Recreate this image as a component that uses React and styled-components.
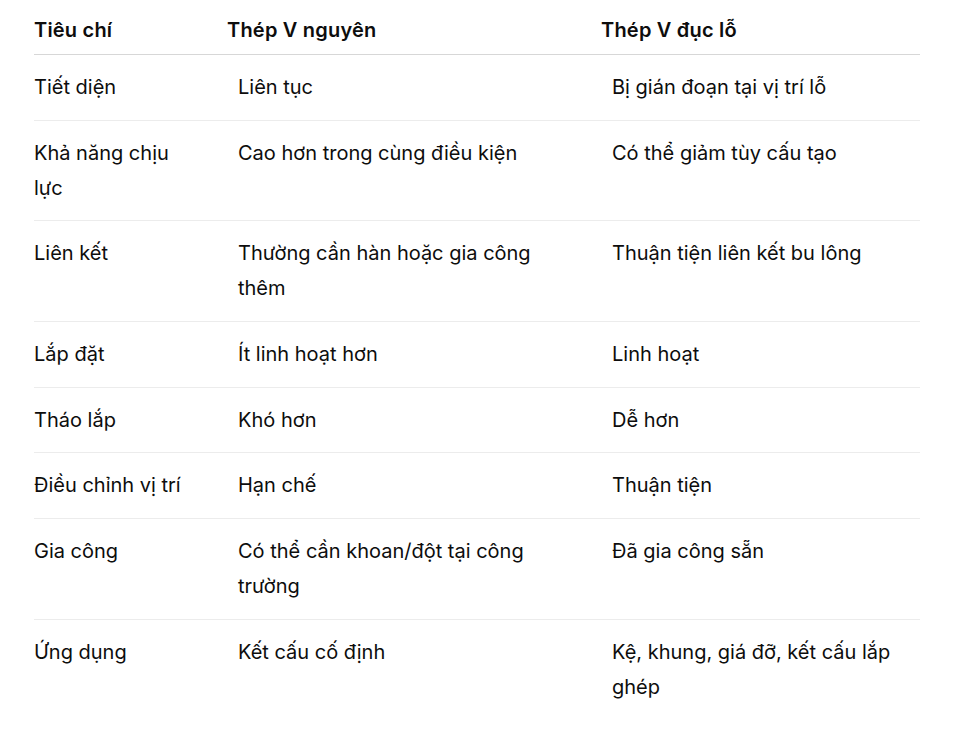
import React from 'react';
import styled, { createGlobalStyle } from 'styled-components';

const GlobalStyle = createGlobalStyle`
  body {
    margin: 0;
    background: #ffffff;
    font-family: Inter, "Noto Sans", "Liberation Sans", sans-serif;
    color: #0d0d0d;
  }
`;

const Page = styled.div`
  padding: 8px 57px 0 34px;
`;

const Table = styled.table`
  width: 886px;
  border-collapse: collapse;
  table-layout: fixed;
  font-size: 20px;
  line-height: 35px;
`;

const HeadCell = styled.th`
  text-align: left;
  font-weight: 600;
  letter-spacing: 0.2px;
  padding: 5px 24px 6px 0;
  border-bottom: 1px solid #d7d7d7;
`;

const Row = styled.tr`
  border-bottom: 1px solid #ececec;
  &:last-child {
    border-bottom: none;
  }
`;

const Cell = styled.td`
  vertical-align: top;
  padding: 15px ${p => (p.$last ? '0' : '30px')} 14.7px ${p => (p.$first ? '0' : '11px')};
`;

const rows = [
  ['Tiết diện', 'Liên tục', 'Bị gián đoạn tại vị trí lỗ'],
  ['Khả năng chịu lực', 'Cao hơn trong cùng điều kiện', 'Có thể giảm tùy cấu tạo'],
  ['Liên kết', 'Thường cần hàn hoặc gia công thêm', 'Thuận tiện liên kết bu lông'],
  ['Lắp đặt', 'Ít linh hoạt hơn', 'Linh hoạt'],
  ['Tháo lắp', 'Khó hơn', 'Dễ hơn'],
  ['Điều chỉnh vị trí', 'Hạn chế', 'Thuận tiện'],
  ['Gia công', 'Có thể cần khoan/đột tại công trường', 'Đã gia công sẵn'],
  ['Ứng dụng', 'Kết cấu cố định', 'Kệ, khung, giá đỡ, kết cấu lắp ghép'],
];

export default function App() {
  return (
    <Page>
      <GlobalStyle />
      <Table>
        <colgroup>
          <col style={{ width: 193 }} />
          <col style={{ width: 374 }} />
          <col style={{ width: 319 }} />
        </colgroup>
        <thead>
          <tr>
            <HeadCell>Tiêu chí</HeadCell>
            <HeadCell>Thép V nguyên</HeadCell>
            <HeadCell>Thép V đục lỗ</HeadCell>
          </tr>
        </thead>
        <tbody>
          {rows.map(r => (
            <Row key={r[0]}>
              <Cell $first>{r[0]}</Cell>
              <Cell>{r[1]}</Cell>
              <Cell $last>{r[2]}</Cell>
            </Row>
          ))}
        </tbody>
      </Table>
    </Page>
  );
}
